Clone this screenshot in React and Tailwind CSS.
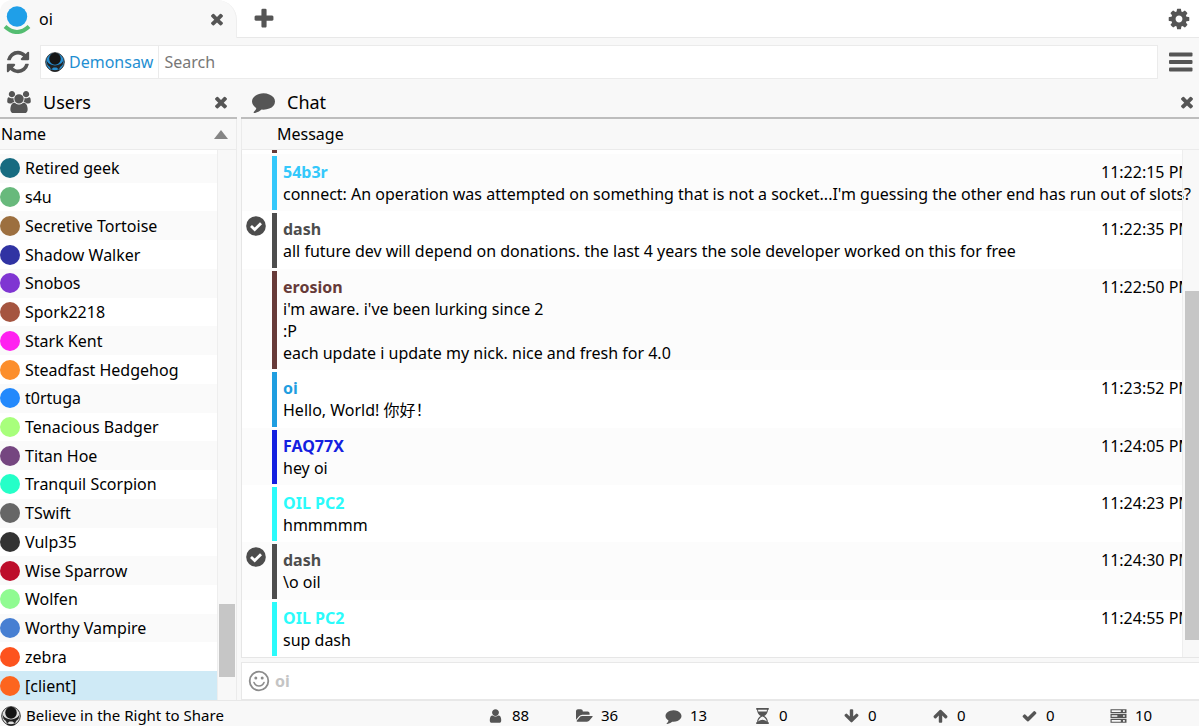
const ICONS = {
  times: 'M1490 1322q0 40-28 68l-136 136q-28 28-68 28t-68-28l-294-294-294 294q-28 28-68 28t-68-28l-136-136q-28-28-28-68t28-68l294-294-294-294q-28-28-28-68t28-68l136-136q28-28 68-28t68 28l294 294 294-294q28-28 68-28t68 28l136 136q28 28 28 68t-28 68l-294 294 294 294q28 28 28 68z',
  plus: 'M1600 736v192q0 40-28 68t-68 28h-416v416q0 40-28 68t-68 28h-192q-40 0-68-28t-28-68v-416h-416q-40 0-68-28t-28-68v-192q0-40 28-68t68-28h416v-416q0-40 28-68t68-28h192q40 0 68 28t28 68v416h416q40 0 68 28t28 68z',
  cog: 'M1152 896q0-106-75-181t-181-75-181 75-75 181 75 181 181 75 181-75 75-181zm512-109v222q0 12-8 23t-20 13l-185 28q-19 54-39 91 35 50 107 138 10 12 10 25t-9 23q-27 37-99 108t-94 71q-12 0-26-9l-138-108q-44 23-91 38-16 136-29 186-7 28-36 28h-222q-14 0-24.5-8.5t-11.5-21.5l-28-184q-49-16-90-37l-141 107q-10 9-25 9-14 0-25-11-126-114-165-168-7-10-7-23 0-12 8-23 15-21 51-66.5t54-70.5q-27-50-41-99l-183-27q-13-2-21-12.5t-8-23.5v-222q0-12 8-23t19-13l186-28q14-46 39-92-40-57-107-138-10-12-10-24 0-10 9-23 26-36 98.5-107.5t94.5-71.5q13 0 26 10l138 107q44-23 91-38 16-136 29-186 7-28 36-28h222q14 0 24.5 8.5t11.5 21.5l28 184q49 16 90 37l142-107q9-9 24-9 13 0 25 10 129 119 165 170 7 8 7 22 0 12-8 23-15 21-51 66.5t-54 70.5q26 50 41 98l183 28q13 2 21 12.5t8 23.5z',
  refresh: 'M1639 1056q0 5-1 7-64 268-268 434.5t-478 166.5q-146 0-282.5-55t-243.5-157l-129 129q-19 19-45 19t-45-19-19-45v-448q0-26 19-45t45-19h448q26 0 45 19t19 45-19 45l-137 137q71 66 161 102t187 36q134 0 250-65t186-179q11-17 53-117 8-23 30-23h192q13 0 22.5 9.5t9.5 22.5zm25-800v448q0 26-19 45t-45 19h-448q-26 0-45-19t-19-45 19-45l138-138q-148-137-349-137-134 0-250 65t-186 179q-11 17-53 117-8 23-30 23h-199q-13 0-22.5-9.5t-9.5-22.5v-7q65-268 270-434.5t480-166.5q146 0 284 55.5t245 156.5l130-129q19-19 45-19t45 19 19 45z',
  users: 'M593 896q-162 5-265 128h-134q-82 0-138-40.5t-56-118.5q0-353 124-353 6 0 43.5 21t97.5 42.5 119 21.5q67 0 133-23-5 37-5 66 0 139 81 256zm1071 637q0 120-73 189.5t-194 69.5h-874q-121 0-194-69.5t-73-189.5q0-53 3.5-103.5t14-109 26.5-108.5 43-97.5 62-81 85.5-53.5 111.5-20q10 0 43 21.5t73 48 107 48 135 21.5 135-21.5 107-48 73-48 43-21.5q61 0 111.5 20t85.5 53.5 62 81 43 97.5 26.5 108.5 14 109 3.5 103.5zm-1024-1277q0 106-75 181t-181 75-181-75-75-181 75-181 181-75 181 75 75 181zm704 384q0 159-112.5 271.5t-271.5 112.5-271.5-112.5-112.5-271.5 112.5-271.5 271.5-112.5 271.5 112.5 112.5 271.5zm576 225q0 78-56 118.5t-138 40.5h-134q-103-123-265-128 81-117 81-256 0-29-5-66 66 23 133 23 59 0 119-21.5t97.5-42.5 43.5-21q124 0 124 353zm-128-609q0 106-75 181t-181 75-181-75-75-181 75-181 181-75 181 75 75 181z',
  comment: 'M1792 896q0 174-120 321.5t-326 233-450 85.5q-70 0-145-8-198 175-460 242-49 14-114 22-17 2-30.5-9t-17.5-29v-1q-3-4-.5-12t2-10 4.5-9.5l6-9 7-8.5 8-9q7-8 31-34.5t34.5-38 31-39.5 32.5-51 27-59 26-76q-157-89-247.5-220t-90.5-281q0-130 71-248.5t191-204.5 286-136.5 348-50.5q244 0 450 85.5t326 233 120 321.5z',
  user: 'M1536 1399q0 109-62.5 187t-150.5 78h-854q-88 0-150.5-78t-62.5-187q0-85 8.5-160.5t31.5-152 58.5-131 94-89 134.5-34.5q131 128 313 128t313-128q76 0 134.5 34.5t94 89 58.5 131 31.5 152 8.5 160.5zm-256-887q0 159-112.5 271.5t-271.5 112.5-271.5-112.5-112.5-271.5 112.5-271.5 271.5-112.5 271.5 112.5 112.5 271.5z',
  folder: 'M1879 952q0 31-31 66l-336 396q-43 51-120.5 86.5t-143.5 35.5h-1088q-34 0-60.5-13t-26.5-43q0-31 31-66l336-396q43-51 120.5-86.5t143.5-35.5h1088q34 0 60.5 13t26.5 43zm-343-344v160h-832q-94 0-197 47.5t-164 119.5l-337 396-5 6q0-4-.5-12.5t-.5-12.5v-960q0-92 66-158t158-66h320q92 0 158 66t66 158v32h544q92 0 158 66t66 158z',
  hourglass: 'M192 0h1408v192h-96c0 340-170 560-410 704 240 144 410 364 410 704h96v192h-1408v-192h96c0-340 170-560 410-704-240-144-410-364-410-704h-96zM400 192c0 80 12 140 30 200h932c18-60 30-120 30-200zM896 960c-250 90-430 290-480 560 140-120 320-200 480-200s340 80 480 200c-50-270-230-470-480-560z',
  down: 'M1675 832q0 53-37 90l-651 652q-39 37-91 37-53 0-90-37l-651-652q-38-36-38-90 0-53 38-91l74-75q39-37 91-37 53 0 90 37l294 294v-704q0-52 38-90t90-38h128q52 0 90 38t38 90v704l294-294q37-37 90-37 52 0 91 37l75 75q37 39 37 91z',
  up: 'M1675 971q0 51-37 90l-75 75q-38 38-91 38-54 0-90-38l-294-293v704q0 52-37.5 84.5t-90.5 32.5h-128q-53 0-90.5-32.5t-37.5-84.5v-704l-294 293q-36 38-90 38t-90-38l-75-75q-38-38-38-90 0-53 38-91l651-651q35-37 90-37 54 0 91 37l651 651q37 39 37 91z',
  check: 'M1671 566q0 40-28 68l-724 724-136 136q-28 28-68 28t-68-28l-136-136-362-362q-28-28-28-68t28-68l136-136q28-28 68-28t68 28l294 295 656-657q28-28 68-28t68 28l136 136q28 28 28 68z',
  server: 'M0 128h1792v448h-1792zM128 256v192h1024v-192zM1408 256v192h192v-192zM0 672h1792v448h-1792zM128 800v192h640v-192zM1408 800v192h192v-192zM0 1216h1792v448h-1792zM128 1344v192h1024v-192zM1408 1344v192h192v-192z',
};

const USERS = [
  { name: 'Retired geek', color: '#176b80' },
  { name: 's4u', color: '#68b97c' },
  { name: 'Secretive Tortoise', color: '#9c6f3f' },
  { name: 'Shadow Walker', color: '#3033a3' },
  { name: 'Snobos', color: '#7f35d2' },
  { name: 'Spork2218', color: '#a55540' },
  { name: 'Stark Kent', color: '#ff21f0' },
  { name: 'Steadfast Hedgehog', color: '#fc8e2c' },
  { name: 't0rtuga', color: '#2389fc' },
  { name: 'Tenacious Badger', color: '#a8ff7c' },
  { name: 'Titan Hoe', color: '#754680' },
  { name: 'Tranquil Scorpion', color: '#25ffc8' },
  { name: 'TSwift', color: '#666666' },
  { name: 'Vulp35', color: '#333333' },
  { name: 'Wise Sparrow', color: '#bd0d2b' },
  { name: 'Wolfen', color: '#90fb92' },
  { name: 'Worthy Vampire', color: '#477fd2' },
  { name: 'zebra', color: '#fd531e' },
  { name: '[client]', color: '#fd651e', selected: true },
];

const MESSAGES = [
  { name: '54b3r', color: '#34c8fb', time: '11:22:15 PM', lines: ["connect: An operation was attempted on something that is not a socket...I'm guessing the other end has run out of slots?"] },
  { name: 'dash', color: '#4d4d4d', time: '11:22:35 PM', verified: true, lines: ['all future dev will depend on donations. the last 4 years the sole developer worked on this for free'] },
  { name: 'erosion', color: '#663a38', time: '11:22:50 PM', lines: ["i'm aware. i've been lurking since 2", ':P', 'each update i update my nick. nice and fresh for 4.0'] },
  { name: 'oi', color: '#1f9ee0', time: '11:23:52 PM', lines: ['Hello, World! 你好！'] },
  { name: 'FAQ77X', color: '#1420e0', time: '11:24:05 PM', lines: ['hey oi'] },
  { name: 'OIL PC2', color: '#2bfbfb', time: '11:24:23 PM', lines: ['hmmmmm'] },
  { name: 'dash', color: '#4d4d4d', time: '11:24:30 PM', verified: true, lines: ['\\o oil'] },
  { name: 'OIL PC2', color: '#2bfbfb', time: '11:24:55 PM', lines: ['sup dash'] },
];

const STATS = [
  { icon: 'user', label: 'Users', value: 88 },
  { icon: 'folder', label: 'Folders', value: 36, wide: true },
  { icon: 'comment', label: 'Messages', value: 13 },
  { icon: 'hourglass', label: 'Queued', value: 0 },
  { icon: 'down', label: 'Downloads', value: 0 },
  { icon: 'up', label: 'Uploads', value: 0 },
  { icon: 'check', label: 'Completed', value: 0 },
  { icon: 'server', label: 'Servers', value: 10 },
];

export default function App() {
  return (
    <div className="h-screen flex flex-col overflow-hidden bg-[#f8f8f8] text-black text-base font-['Noto_Sans','Noto_Sans_CJK_SC',sans-serif]">
      <TabBar />
      <Toolbar />
      <main className="flex-1 min-h-0 flex gap-1">
        <UsersPanel />
        <ChatPanel />
      </main>
      <StatusBar />
    </div>
  );
}

function Icon({ name, className, wide }) {
  return (
    <svg viewBox={wide ? '0 0 1920 1792' : '0 0 1792 1792'} className={className} fill="currentColor" fillRule="evenodd" aria-hidden="true">
      <path d={ICONS[name]} />
    </svg>
  );
}

function IconButton({ label, children, className }) {
  return (
    <button type="button" aria-label={label} className={`shrink-0 flex items-center justify-center text-[#555555] ${className || ''}`}>
      {children}
    </button>
  );
}

function TabBar() {
  return (
    <header className="h-[38px] shrink-0 flex bg-white">
      <div className="w-[237px] shrink-0 flex items-center pl-[3px] pr-2.5 bg-[#f8f8f8] border-r border-[#eeeeee] rounded-tr-[20px] rounded-tl-[12px]">
        <svg viewBox="0 0 28 30" className="w-7 h-[30px]" aria-hidden="true">
          <circle cx="14" cy="12.5" r="10.2" fill="#1f9fe8" />
          <path d="M2 22.5Q14 33.500 26 22.500" fill="none" stroke="#54bd71" strokeWidth="4" />
        </svg>
        <span className="flex-1 pl-2">oi</span>
        <IconButton label="Close tab">
          <Icon name="times" className="w-[18px] h-[18px]" />
        </IconButton>
      </div>
      <div className="flex-1 flex items-center justify-between pl-[15px] pr-2 border-b border-[#e8e8e8]">
        <IconButton label="New tab">
          <Icon name="plus" className="w-6 h-6" />
        </IconButton>
        <IconButton label="Settings">
          <Icon name="cog" className="w-6 h-6" />
        </IconButton>
      </div>
    </header>
  );
}

function DemonLogo({ className, color }) {
  return (
    <svg viewBox="0 0 20 20" className={className} aria-hidden="true">
      <circle cx="10" cy="10" r="9.300" fill={color} stroke="#333333" strokeWidth="1" />
      <path d="M1.500 8.500Q4 13 10 13.500Q16 13 18.500 8.500L17.500 13Q14.500 14.500 14 17.500L11.500 15.500H8.500L6 17.500Q5.500 14.500 2.500 13Z" fill="#222222" />
      <ellipse cx="10" cy="6.800" rx="5.800" ry="6" fill="#151515" />
      <path d="M6 18Q10 20 14 18" fill="none" stroke="#222222" strokeWidth="1.500" />
    </svg>
  );
}

function Toolbar() {
  return (
    <div className="h-12 shrink-0 flex items-center">
      <IconButton label="Refresh" className="w-10 pr-[5px]">
        <Icon name="refresh" className="w-[26px] h-[26px]" />
      </IconButton>
      <div className="flex-1 h-[34px] flex bg-white border border-[#ebebeb]">
        <button type="button" className="flex items-center gap-1 pl-1 pr-[5px] border-r border-[#ebebeb] text-[#1f8fd2]">
          <DemonLogo className="w-5 h-5" color="#278fd2" />
          Demonsaw
        </button>
        <input type="search" aria-label="Search" placeholder="Search" className="flex-1 min-w-0 px-[5px] outline-none placeholder:text-[#777777]" />
      </div>
      <IconButton label="Menu" className="w-[41px] pl-1">
        <svg viewBox="0 0 24 20" className="w-6 h-5" fill="currentColor" aria-hidden="true">
          <rect x="0" y="0.500" width="23.500" height="4" rx="1" />
          <rect x="0" y="8" width="23.500" height="4" rx="1" />
          <rect x="0" y="15.500" width="23.500" height="4" rx="1" />
        </svg>
      </IconButton>
    </div>
  );
}

function PanelHeader({ title, icon, closeLabel, className }) {
  return (
    <div className={`h-[33px] shrink-0 flex items-center border-b-2 border-[#bdbdbd] ${className}`}>
      {icon}
      <h2 className="flex-1 text-lg">{title}</h2>
      <IconButton label={closeLabel}>
        <Icon name="times" className="w-[18px] h-[18px]" />
      </IconButton>
    </div>
  );
}

function UsersPanel() {
  return (
    <section className="w-[237px] shrink-0 flex flex-col">
      <PanelHeader
        title="Users"
        closeLabel="Close users"
        className="pl-[7px] pr-[7px]"
        icon={<Icon name="users" wide className="w-6 h-[22px] mr-3 text-[#555555]" />}
      />
      <button type="button" className="h-[31px] shrink-0 flex items-center justify-between pl-px pr-2 border-r border-b border-[#ebebeb]">
        Name
        <svg viewBox="0 0 14 9" className="w-3.5 h-[9px]" aria-hidden="true">
          <path d="M7 0L14 9H0Z" fill="#858585" />
        </svg>
      </button>
      <div className="flex-1 min-h-0 flex border-r border-[#ebebeb]">
        <ul className="flex-1 flex flex-col pt-1 bg-white">
          {USERS.map((user) => (
            <li
              key={user.name}
              className={`flex-1 min-h-0 flex items-center gap-[5px] ${user.selected ? 'bg-[#cfeaf6]' : 'odd:bg-[#fafafa]'}`}
            >
              <span className="w-5 h-5 shrink-0 rounded-full" style={{ backgroundColor: user.color }} />
              {user.name}
            </li>
          ))}
        </ul>
        {/* Scrollbar */}
        <div className="w-[19px] flex flex-col justify-end px-px pb-[23px] border-l border-[#eeeeee]">
          <div className="h-[73px] bg-[#c6c6c6]" />
        </div>
      </div>
    </section>
  );
}

function ChatPanel() {
  return (
    <section className="flex-1 min-w-0 flex flex-col">
      <PanelHeader
        title="Chat"
        closeLabel="Close chat"
        className="pl-[11px] pr-[3px]"
        icon={<Icon name="comment" className="w-[23px] h-[23px] mr-3 text-[#555555]" />}
      />
      <div className="h-[31px] shrink-0 flex items-center pl-[35px] border-l border-b border-[#ebebeb]">Message</div>
      <div className="flex-1 min-h-0 flex border-l border-b border-[#e6e6e6]">
        <ol className="flex-1 min-w-0 flex flex-col bg-white">
          {/* Tail of the message scrolled out of view */}
          <li className="h-1 shrink-0 pl-[30px]" aria-hidden="true">
            <div className="w-[5px] h-[3px] bg-[#663a38]" />
          </li>
          {MESSAGES.map((message) => (
            <Message key={message.time} message={message} />
          ))}
        </ol>
        {/* Scrollbar */}
        <div className="w-[17px] flex flex-col justify-end pl-0.5 pb-[17px] border-l border-[#eeeeee]">
          <div className="h-[349px] bg-[#c6c6c6]" />
        </div>
      </div>
      <label className="h-[38px] mt-1 shrink-0 flex items-center gap-[5px] pl-1.5 bg-white border border-r-0 border-[#e8e8e8]">
        <svg viewBox="0 0 22 22" className="w-[22px] h-[22px] text-[#8c8c8c]" fill="none" stroke="currentColor" aria-hidden="true">
          <circle cx="11" cy="11" r="9.300" strokeWidth="1.800" />
          <circle cx="7.800" cy="8" r="1.500" fill="currentColor" stroke="none" />
          <circle cx="14.200" cy="8" r="1.500" fill="currentColor" stroke="none" />
          <path d="M6 12.500Q7.500 16 11 16T16 12.500" strokeWidth="1.600" strokeLinecap="round" />
        </svg>
        <input type="text" aria-label="Message" placeholder="oi" className="flex-1 min-w-0 font-bold outline-none placeholder:text-[#c4c4c4]" />
      </label>
    </section>
  );
}

function Message({ message }) {
  return (
    <li className="grow flex even:bg-[#fcfcfc]">
      <div className="w-[30px] shrink-0 pl-1 pt-[5px]">
        {message.verified && (
          <svg viewBox="0 0 20 20" className="w-5 h-5" aria-label="Verified">
            <circle cx="10" cy="10" r="9.800" fill="#4d4d4d" />
            <path d="M5 10L8.700 13.500L15 7.200" fill="none" stroke="#ffffff" strokeWidth="2.800" />
          </svg>
        )}
      </div>
      <div className="w-[5px] shrink-0 mt-0.5 mb-px" style={{ backgroundColor: message.color }} />
      <div className="flex-1 min-w-0 pl-1.5 pt-[7px] pb-1.5 leading-[22px]">
        <div className="flex justify-between">
          <span className="font-bold" style={{ color: message.color }}>{message.name}</span>
          <time className="w-[81px] overflow-hidden whitespace-nowrap">{message.time}</time>
        </div>
        {message.lines.map((line) => (
          <p key={line} className="whitespace-nowrap">{line}</p>
        ))}
      </div>
    </li>
  );
}

function StatusBar() {
  return (
    <footer className="h-[26px] shrink-0 flex items-center justify-between border-t border-[#e8e8e8] pt-1 pl-px text-[15px]">
      <div className="flex items-center gap-[5px]">
        <DemonLogo className="w-5 h-5" color="#dddddd" />
        Believe in the Right to Share
      </div>
      <ul className="w-[712px] grid grid-cols-8">
        {STATS.map((stat) => (
          <li key={stat.label} className="flex items-center gap-2">
            <Icon name={stat.icon} wide={stat.wide} className="w-[17px] h-4 text-[#555555]" />
            <span aria-label={stat.label}>{stat.value}</span>
          </li>
        ))}
      </ul>
    </footer>
  );
}
